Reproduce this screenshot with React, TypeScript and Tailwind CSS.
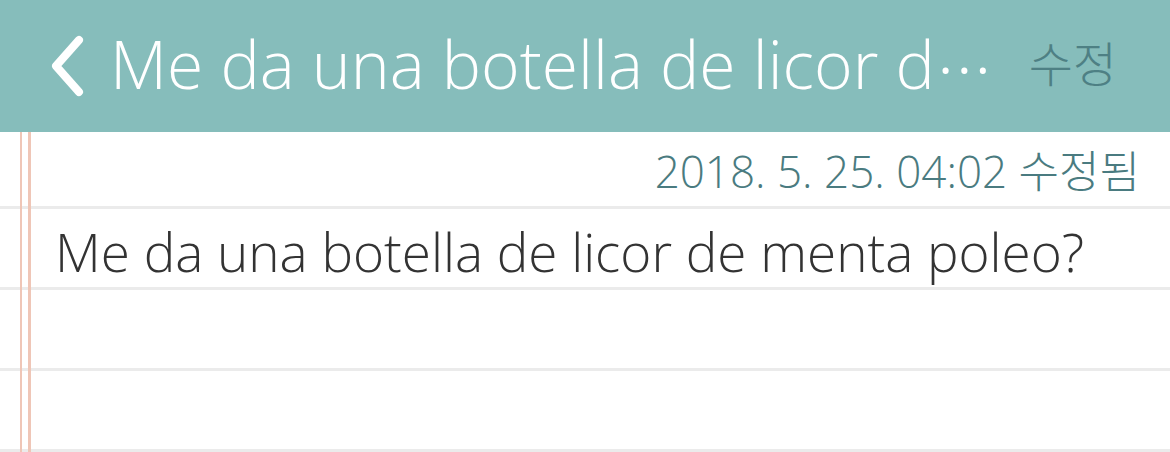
const FONT = "font-['Open_Sans','Noto_Sans_CJK_KR',sans-serif]"

function BackChevron() {
  return (
    <svg width="44" height="64" viewBox="0 0 44 64" fill="none" aria-hidden="true">
      <path d="M33 6 L10 32 L33 58" stroke="white" strokeWidth="8" strokeLinecap="round" strokeLinejoin="round" />
    </svg>
  )
}

function RuledLine({ children }: { children?: React.ReactNode }) {
  return <div className="flex h-[81px] items-center border-b-[3px] border-[#ebebeb] pl-[55px]">{children}</div>
}

export default function App() {
  return (
    <div className={`h-[452px] w-[1170px] overflow-hidden bg-white ${FONT}`}>
      <header className="flex h-[132px] items-center bg-[#86bdbb] pl-[46px] pr-[53px]">
        <BackChevron />
        <h1 className="ml-[20px] flex min-w-0 flex-1 items-baseline whitespace-nowrap pb-[6px] text-[66px] font-light leading-none text-white">
          <span>Me da una botella de licor d</span>
          <span className="ml-[4px] text-[52px] font-normal tracking-[5px]">···</span>
        </h1>
        <button type="button" className="pb-[4px] text-[48px] font-light leading-none text-[#4e8084]">
          수정
        </button>
      </header>

      <main className="relative">
        <div className="absolute inset-y-0 left-[20px] w-[2px] bg-[#efc6b7]" />
        <div className="absolute inset-y-0 left-[28px] w-[3px] bg-[#efc6b7]" />

        <div className="flex h-[77px] items-center justify-end border-b-[3px] border-[#ebebeb] pr-[30px] pt-[4px]">
          <span className="text-[44px] font-light leading-none text-[#4a7b80]">2018. 5. 25. 04:02 수정됨</span>
        </div>
        <RuledLine>
          <p className="pt-[6px] text-[53px] font-light leading-none text-[#333333]">
            Me da una botella de licor de menta poleo?
          </p>
        </RuledLine>
        <RuledLine />
        <RuledLine />
      </main>
    </div>
  )
}
